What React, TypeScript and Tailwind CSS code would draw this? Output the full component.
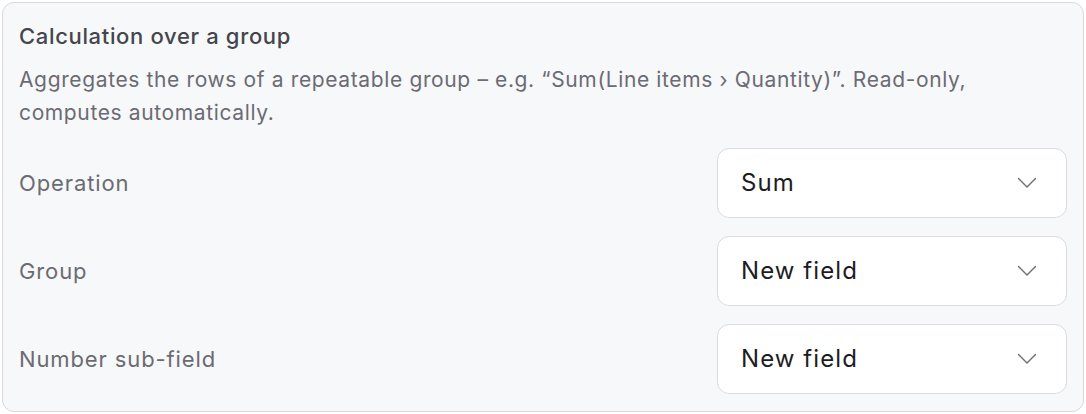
import React from 'react';

const Chevron: React.FC = () => (
  <svg width="20" height="12" viewBox="0 0 20 12" fill="none" className="shrink-0">
    <path d="M1.5 1.5 L10 10 L18.5 1.5" stroke="#6b6b73" strokeWidth="1.4" strokeLinecap="round" strokeLinejoin="round" />
  </svg>
);

const SelectRow: React.FC<{ label: string; value: string }> = ({ label, value }) => (
  <div className="flex items-center justify-between">
    <span className="text-[22px] tracking-[0.04em] text-[#6b6b72]">{label}</span>
    <button className="flex h-[70px] w-[350px] items-center justify-between rounded-[12px] border border-[#dcdcdf] bg-white pl-[23px] pr-[29px] text-left">
      <span className="text-[24px] tracking-[0.045em] text-[#1d1d1f]">{value}</span>
      <Chevron />
    </button>
  </div>
);

export default function App() {
  return (
    <div className="bg-white p-[2px]" style={{ fontFamily: 'Inter, "Noto Sans", sans-serif' }}>
      <div className="flex h-[410px] flex-col rounded-[12px] border border-[#d9d9dc] bg-[#f7f8fa] px-4 pt-[19px] pb-4">
        <h2 className="text-[22px] font-medium leading-[28px] tracking-[0.03em] text-[#45454c]">Calculation over a group</h2>
        <p className="mt-[13px] max-w-[1000px] text-[21px] leading-[33px] tracking-[0.03em] text-[#6b6b72]">
          Aggregates the rows of a repeatable group – e.g. “Sum(Line items › Quantity)”. Read-only, computes automatically.
        </p>
        <div className="mt-[19px] flex flex-col gap-[18px]">
          <SelectRow label="Operation" value="Sum" />
          <SelectRow label="Group" value="New field" />
          <SelectRow label="Number sub-field" value="New field" />
        </div>
      </div>
    </div>
  );
}
